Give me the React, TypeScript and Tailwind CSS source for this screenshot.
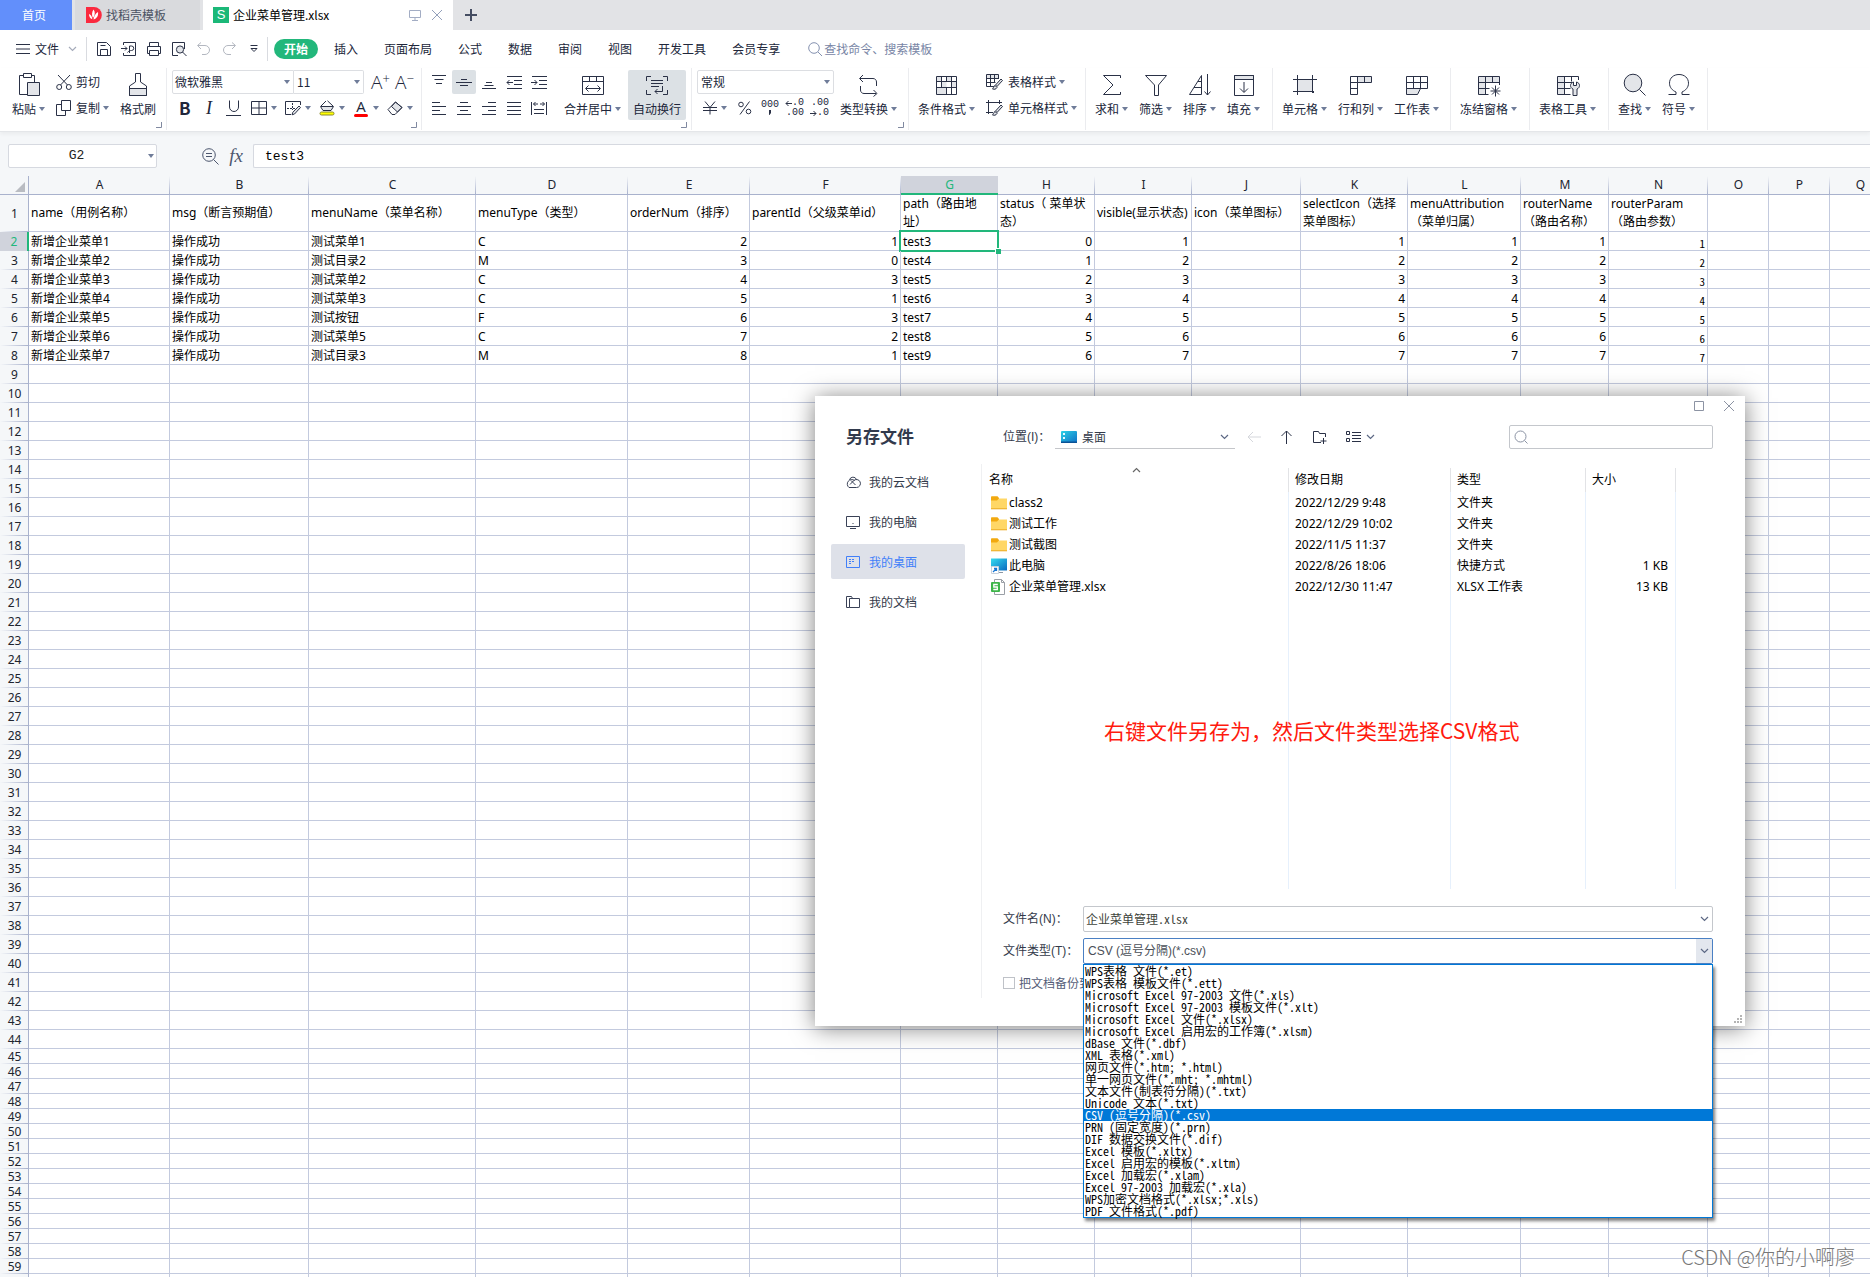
import React from 'react';

const INK = '#2a3146';
const PALE = '#e3e5e9';

type SvgProps = { w?: number; h?: number; color?: string; sw?: number; children: React.ReactNode };

function Svg({ w = 24, h = 24, color = INK, sw = 1, children }: SvgProps) {
  return (
    <svg width={w} height={h} viewBox={`0 0 ${w} ${h}`} fill="none" stroke={color} strokeWidth={sw} className="block shrink-0" aria-hidden="true">
      {children}
    </svg>
  );
}

function Caret() {
  return (
    <svg width="6" height="4" viewBox="0 0 6 4" className="block shrink-0" aria-hidden="true">
      <path d="M0 0h6L3 4z" fill="#6f7c99" />
    </svg>
  );
}

function Chevron({ color = '#5c6884' }: { color?: string }) {
  return (
    <Svg w={9} h={6} color={color} sw={1.2}>
      <path d="M1 1l3.5 3.5L8 1" />
    </Svg>
  );
}

/* ---------- ribbon drawings ---------- */

const icons = {
  paste: (
    <Svg>
      <path d="M6.5 2.5h-4v19h8M14.5 2.5h3v7" />
      <path d="M6.5.5h8v4h-8z" fill="#fff" />
      <path d="M10.5 9.5h12v13h-12z" fill={PALE} />
    </Svg>
  ),
  brush: (
    <Svg>
      <path d="M3.5 15.5h17v7h-17z" fill={PALE} />
      <path d="M9.5.5h5V9l6 4v9.5h-17V13l6-4z" />
    </Svg>
  ),
  cut: (
    <Svg w={16} h={16}>
      <circle cx="3.2" cy="13" r="2.5" />
      <circle cx="12.8" cy="13" r="2.5" />
      <path d="M2 1l9.5 10M14 1l-9.5 10" />
    </Svg>
  ),
  copy: (
    <Svg w={16} h={16}>
      <path d="M5.5.5h9v10h-9z" />
      <path d="M5.5 4.5h-5v11h9v-5" />
    </Svg>
  ),
  merge: (
    <Svg>
      <path d="M1.5 3.5h21v18h-21zM1.5 8.5h21M8.5 3.5v5M15.5 3.5v5" />
      <path d="M5 15.5h14M7.5 12.5l-3 3 3 3M16.5 12.5l3 3-3 3" />
    </Svg>
  ),
  wrap: (
    <Svg>
      <path d="M1.5 8V3.5H6M18 3.5h4.5V8M22.5 17v4.5H18M6 21.5H1.5V17" />
      <path d="M6 7.5h12M6 10.5h12M6 13.5h8M17.5 13v5.5H10M12.5 16L10 18.5l2.5 2.5" />
    </Svg>
  ),
  convert: (
    <Svg>
      <path d="M3 5.5h13c2 0 3.500 1.500 3.500 3.500v4M6 2L2.500 5.500 6 9M19 20.500H7c-2 0-3.500-1.500-3.500-3.500v-4M16.500 17l3.500 3.500-3.500 3" />
    </Svg>
  ),
  cond: (
    <Svg>
      <path d="M1.5 3.500h5v5h-5zM11.500 3.500h5v5h-5zM6.500 8.500h5v6h-5zM16.500 8.500h5v6h-5zM1.500 14.500h10v7h-10z" fill={PALE} stroke="none" />
      <path d="M1.500 3.500h20v18h-20zM1.500 8.500h20M1.500 14.500h20M6.500 3.500v11M11.500 3.500v5M16.500 8.500v13M11.500 14.500v7M16.500 3.500v5" />
    </Svg>
  ),
  tableStyle: (
    <Svg w={18} h={16}>
      <path d="M1 1h11v4H1z" fill={PALE} stroke="none" />
      <path d="M8 12.5H.5V.5h12V5M.5 4.5h12M.5 8.5h9M4.5.5v12M8.500.5v8" />
      <path d="M15 5l1.500 1.500-5.500 6-1.500-1.500zM9 11.500l2 2c-1 2-3 2-4.500 1.500 1-.8.8-2.500 2.500-3.500z" fill={PALE} />
    </Svg>
  ),
  cellStyle: (
    <Svg w={18} h={16}>
      <path d="M2.5 0v14M0 2.5h16M13.5 0v4M0 12.5h7" />
      <path d="M15 5l1.500 1.500-5.500 6-1.500-1.500zM9 11.500l2 2c-1 2-3 2-4.500 1.500 1-.8.8-2.500 2.500-3.500z" fill={PALE} />
    </Svg>
  ),
  sum: (
    <Svg>
      <path d="M20.5 5V2.500h-17L13 12l-9.500 9.500h17V19" />
    </Svg>
  ),
  filter: (
    <Svg>
      <path d="M1.5 2.500h21L14.500 12v10.500h-4V12z" />
    </Svg>
  ),
  sort: (
    <Svg>
      <path d="M13.5 2.500v19h-12zM10 8.500h3.500M6 14.500h7.500M19.500 1v21M16.500 18.500l3 3.500 3-3.500" />
    </Svg>
  ),
  fill: (
    <Svg>
      <path d="M2.5 2.500h19v4h-19z" fill={PALE} />
      <path d="M2.5 2.500h19v20h-19zM12 9v10M8 15.500l4 4 4-4" />
    </Svg>
  ),
  cell: (
    <Svg>
      <path d="M4.5 6.500h15v12h-15z" fill={PALE} />
      <path d="M4.500 2v20M19.500 2v13M0 6.500h24M0 18.500h17" />
      <path d="M19 18h2v2h-2z" fill={INK} stroke="none" />
    </Svg>
  ),
  rowcol: (
    <Svg>
      <path d="M9 4h13v6H9z" fill={PALE} stroke="none" />
      <path d="M1.5 3.500h21v6h-14v12h-7zM8.500 3.500v6M15.500 3.500v6M1.500 9.500h7M1.500 15.500h7" />
    </Svg>
  ),
  sheet: (
    <Svg>
      <path d="M1.5 15.500h14l-3 6h-11z" fill={PALE} />
      <path d="M1.500 15.500v-12h21v12zM1.500 9.500h21M8.500 3.500v12M15.500 3.500v12" />
    </Svg>
  ),
  freeze: (
    <Svg>
      <path d="M1.500 3.500h21v6h-14v12h-7z" fill={PALE} stroke="none" />
      <path d="M22.500 12V3.500h-21v18h10M1.500 9.500h21M1.500 15.500h11M8.500 3.500v18M15.500 3.500v6" />
      <path d="M18.500 12.500v11M13.500 18h10M15 14.500l7 7M22 14.500l-7 7" />
    </Svg>
  ),
  tools: (
    <Svg>
      <path d="M1.500 3.500h7v18h-7z" fill={PALE} stroke="none" />
      <path d="M22.500 7V3.500h-21v18h13M1.500 9.500h15M1.500 15.500h13M8.500 3.500v18M15.500 3.500v5" />
      <path d="M17.500 9v3.500h3V9c2 .5 3 2 3 3.500s-1 3-2.500 3.500v6.500h-4V16c-1.500-.5-2.500-2-2.500-3.500s1-3 3-3.500z" fill={PALE} />
    </Svg>
  ),
  find: (
    <Svg>
      <circle cx="10" cy="10" r="8.800" fill={PALE} />
      <path d="M16.500 16.500l6 6" />
    </Svg>
  ),
  omega: (
    <Svg>
      <path d="M1.500 21.500H9V19c-3.500-1.500-6.500-4.500-6.500-8.800C2.500 5 6.500 1.500 12 1.500s9.500 3.500 9.500 8.700c0 4.300-3 7.300-6.500 8.800v2.500h7.500" />
    </Svg>
  ),
  alignTop: <path d="M1 1.500h14M3.500 5.500h9M5 9.500h6" />,
  alignMid: <path d="M5 5.500h6M0 8.500h16M4 11.500h8" />,
  alignBottom: <path d="M5 8.500h6M3.500 11.500h9M1 14.500h14" />,
  outdent: <path d="M1 2.500h15M8 6.500h8M8 10.500h8M1 14.500h15M7 8.500H1M3.500 6L1 8.500 3.500 11" />,
  indent: <path d="M1 2.500h15M8 6.500h8M8 10.500h8M1 14.500h15M0 8.500h6M3.500 6L6 8.500 3.500 11" />,
  left: <path d="M1 2.500h8M1 6.500h14M1 10.500h8M1 14.500h14" />,
  center: <path d="M4 2.500h8M1 6.500h14M4 10.500h8M1 14.500h14" />,
  right: <path d="M7 2.500h8M1 6.500h14M7 10.500h8M1 14.500h14" />,
  justify: <path d="M1 2.500h14M1 6.500h14M1 10.500h14M1 14.500h14" />,
  distribute: <path d="M.5 2v13M15.500 2v13M2.500 4H7M9 4h4.500M4.500 2l-2 2 2 2M11.500 2l2 2-2 2M3 9.500h10M3 13.500h10" />,
};

/* ---------- ribbon building blocks ---------- */

function Group({ children, className = '' }: { children: React.ReactNode; className?: string }) {
  return <div className={`relative flex h-[62px] shrink-0 items-start gap-[11px] border-r border-[#ebecef] pt-0.5 pl-[9px] ${className}`}>{children}</div>;
}

function Launcher() {
  return (
    <span className="absolute right-1 bottom-0.5">
      <Svg w={6} h={6} color="#8089a0">
        <path d="M5.500 0v5.500H0" />
      </Svg>
    </span>
  );
}

function Big({ icon, label, caret = true, active = false }: { icon: React.ReactNode; label: string; caret?: boolean; active?: boolean }) {
  return (
    <button type="button" className={`flex h-[50px] shrink-0 flex-col items-center gap-1 rounded-xs pt-[3px] ${active ? 'bg-[#dce1e5] px-[5px]' : ''}`}>
      {icon}
      <span className="flex items-center gap-[3px] leading-4 whitespace-nowrap">
        {label}
        {caret && <Caret />}
      </span>
    </button>
  );
}

function Small({ icon, label, caret = true }: { icon: React.ReactNode; label: string; caret?: boolean }) {
  return (
    <button type="button" className="flex h-6 items-center gap-[3px] whitespace-nowrap">
      {icon}
      <span className="pl-px">{label}</span>
      {caret && <Caret />}
    </button>
  );
}

function AlignButton({ name, icon, active = false }: { name: string; icon: React.ReactNode; active?: boolean }) {
  return (
    <button type="button" aria-label={name} className={`flex h-6 w-6 items-center justify-center rounded-xs ${active ? 'bg-[#dce1e5]' : ''}`}>
      <Svg w={16} h={16}>{icon}</Svg>
    </button>
  );
}

function FormatButton({ name, children, caret = true, className = 'w-[34px]' }: { name: string; children: React.ReactNode; caret?: boolean; className?: string }) {
  return (
    <button type="button" aria-label={name} className={`flex h-6 shrink-0 items-center gap-1 ${className}`}>
      {children}
      {caret && <Caret />}
    </button>
  );
}

/* ---------- top bars ---------- */

function TabStrip() {
  return (
    <div className="flex h-[30px] shrink-0 bg-[#e2e3e6] text-xs">
      <button type="button" className="w-[72px] bg-[#628ffb] pr-1 text-white">首页</button>
      <button type="button" className="ml-[3px] flex w-[125px] items-center gap-1 bg-[#d9dadd] pl-[11px] text-[#4b5263]">
        <svg width="16" height="16" viewBox="0 0 16 16" aria-hidden="true">
          <path d="M0 0h8a7.800 8 0 0 1 0 16H0z" fill="#fb2a3f" />
          <path d="M7.500 2.500c2 2.500 1.500 6-.5 8.500C5.500 8.500 5.800 5 7.500 2.500zM12 5c.5 3.500-1 6.500-4.500 7.500C8 9 9.500 6.500 12 5zM3 7c2 .8 3.200 2.800 3.300 5.300C4 11.500 3 9.500 3 7z" fill="#fff" />
        </svg>
        找稻壳模板
      </button>
      <div className="ml-[3px] flex w-[250px] items-center bg-white pl-2.5 text-black">
        <span className="flex h-4 w-4 items-center justify-center bg-[#1bb878] font-['Liberation_Sans'] text-[13px] leading-4 text-white">S</span>
        <span className="flex-1 pl-1">企业菜单管理.xlsx</span>
        <button type="button" aria-label="窗口显示">
          <Svg w={12} h={12} color="#a3adc4"><path d="M.5 1.500h11v7H.5zM6 8.500v3M3 11.500h6" /></Svg>
        </button>
        <button type="button" aria-label="关闭标签" className="pr-2.5 pl-2.5">
          <Svg w={12} h={12} color="#93a0bb"><path d="M1 1l10 10M11 1L1 11" /></Svg>
        </button>
      </div>
      <button type="button" aria-label="新建标签" className="w-9 pl-3">
        <Svg w={12} h={12} color="#454d62" sw={2}><path d="M6 0v12M0 6h12" /></Svg>
      </button>
    </div>
  );
}

const quick: { name: string; icon: React.ReactNode }[] = [
  { name: '保存', icon: <Svg w={16} h={16}><path d="M1.500 1.500h9l4 4v9h-13zM4.500 14V8.500h7V14M4.500 4.500h5" /></Svg> },
  { name: '输出', icon: <Svg w={16} h={16}><path d="M2.500 4V1.500h12v13h-12V12M0 7.500h6M4 5.500l2 2-2 2M8.500 12V5h2a2.200 2.200 0 0 1 0 4.500c-1.500 0-3 .5-4 2" /></Svg> },
  { name: '打印', icon: <Svg w={16} h={16}><path d="M3.500 5V1.500h9V5M3 12.500H1.500v-7h13v7H13M3.500 9.500h9v5h-9z" /></Svg> },
  { name: '打印预览', icon: <Svg w={16} h={16}><path d="M7 14.500H1.500v-13h12V8" /><circle cx="9" cy="8.500" r="3.600" fill={PALE} /><path d="M11.500 11l4 4" /></Svg> },
  { name: '撤销', icon: <Svg w={16} h={16} color="#b3b7c0"><path d="M5 1.500l-3.500 3L5 8M2 4.500h7a4.500 4.500 0 0 1 0 9H6" /></Svg> },
  { name: '恢复', icon: <Svg w={16} h={16} color="#b3b7c0"><path d="M11 1.500l3.500 3L11 8M14 4.500H7a4.500 4.500 0 0 0 0 9h3" /></Svg> },
  { name: '更多', icon: <Svg w={10} h={8}><path d="M1.500.5h7M2 3.500L5 6.500l3-3z" /></Svg> },
];

function MenuRow() {
  return (
    <div className="flex h-[38px] shrink-0 items-center bg-white text-xs text-[#20263a]">
      <button type="button" className="flex w-[87px] items-center gap-[5px] border-r border-[#d9dbe0] py-1 pl-4">
        <Svg w={14} h={12}><path d="M0 1.500h14M0 6h14M0 10.500h14" /></Svg>
        文件
        <span className="pl-1"><Chevron color="#a5abba" /></span>
      </button>
      <div className="flex w-[181px] items-center border-r border-[#d9dbe0] py-1 pl-1">
        {quick.map((q) => (
          <button key={q.name} type="button" aria-label={q.name} className="flex h-4 w-[25px] items-center justify-center">{q.icon}</button>
        ))}
      </div>
      <nav className="flex items-center gap-[26px] pl-1.5">
        <button type="button" className="-mr-2.5 h-5 rounded-full bg-[#22b77b] px-2.5 font-bold text-white">开始</button>
        {['插入', '页面布局', '公式', '数据', '审阅', '视图', '开发工具', '会员专享'].map((t) => (
          <button key={t} type="button" className="whitespace-nowrap">{t}</button>
        ))}
      </nav>
      <label className="flex items-center gap-0.5 pl-7">
        <Svg w={14} h={14} color="#8592b0"><circle cx="6" cy="6" r="5.300" /><path d="M10 10l4 4" /></Svg>
        <input type="text" aria-label="查找命令" placeholder="查找命令、搜索模板" className="w-40 bg-transparent text-xs placeholder:text-[#7885a5] focus:outline-none" />
      </label>
    </div>
  );
}

function SmallArrow({ flip = false }: { flip?: boolean }) {
  return (
    <svg width="7" height="7" viewBox="0 0 7 7" fill="none" stroke={INK} className="block shrink-0" aria-hidden="true">
      <path d={flip ? 'M0 3.500h6M3.500 1L6 3.500 3.500 6' : 'M7 3.500H1M3.500 1L1 3.500 3.500 6'} />
    </svg>
  );
}

function Ribbon() {
  return (
    <div className="z-10 flex h-16 shrink-0 border-b border-[#e4e6e9] bg-white text-xs text-[#20263a] shadow-[0_2px_4px_rgba(0,0,0,0.05)]">
      <Group className="w-[167px]">
        <div className="pl-[3px]"><Big icon={icons.paste} label="粘贴" /></div>
        <div className="flex flex-col gap-0.5">
          <Small icon={icons.cut} label="剪切" caret={false} />
          <Small icon={icons.copy} label="复制" />
        </div>
        <Big icon={icons.brush} label="格式刷" caret={false} />
        <Launcher />
      </Group>

      <Group className="w-[255px]">
        <div className="-ml-1 flex flex-col gap-0.5">
          <div className="flex h-6 items-center">
            <button type="button" aria-label="字体" className="flex h-6 w-[122px] items-center justify-between rounded-l-xs border border-[#dcdee2] pr-[3px] pl-0.5">微软雅黑<Caret /></button>
            <button type="button" aria-label="字号" className="flex h-6 w-[70px] items-center justify-between rounded-r-xs border border-l-0 border-[#dcdee2] pr-[3px] pl-[3px]">11<Caret /></button>
            <button type="button" aria-label="增大字号" className="flex w-6 items-start pl-[7px] font-['Open_Sans'] text-[19px] leading-5 font-light">A<span className="-mt-1 text-[13px]">+</span></button>
            <button type="button" aria-label="减小字号" className="flex w-6 items-start pl-[7px] font-['Open_Sans'] text-[19px] leading-5 font-light">A<span className="-mt-1 text-[13px]">−</span></button>
          </div>
          <div className="flex h-6 items-center pl-1.5">
            <FormatButton name="加粗" caret={false} className="w-7 pl-px text-[17px] font-bold">B</FormatButton>
            <FormatButton name="倾斜" caret={false} className="w-5 font-['Liberation_Serif'] text-[18px] italic">I</FormatButton>
            <FormatButton name="下划线" caret={false} className="w-[25px]"><Svg w={16} h={16}><path d="M3.500.5V7a4.500 4.500 0 0 0 9 0V.5M0 15.500h15" /></Svg></FormatButton>
            <FormatButton name="边框"><Svg w={16} h={16}><path d="M.5 1.500h15v13H.5zM8 1.500v13M.5 8h15" /></Svg></FormatButton>
            <FormatButton name="绘图边框">
              <Svg w={16} h={16}>
                <path d="M15.500 5V1.500H.5v13H6" /><path d="M7.500 3v7M2 8.500h8" strokeDasharray="2 1" />
                <path d="M14 6l1.500 1.500-6 6.500-2.500.8.8-2.500z" fill={PALE} />
              </Svg>
            </FormatButton>
            <FormatButton name="填充颜色">
              <Svg w={16} h={16}>
                <path d="M3 7h11l-2 3H4.500z" fill={PALE} stroke="none" />
                <path d="M7 1L1.500 6.500 4 10.500h8l2.500-4L8.500.8M2 6.500h12" />
                <rect x="1" y="12" width="14" height="3" rx="1.500" fill="#ff0" stroke="#8a8a30" />
              </Svg>
            </FormatButton>
            <FormatButton name="字体颜色">
              <span className="flex w-4 flex-col items-center">
                <span className="h-3 font-['Open_Sans'] text-[15px] leading-3">A</span>
                <span className="mt-0.5 h-[3px] w-3.5 rounded-full bg-[#fe0000]" />
              </span>
            </FormatButton>
            <FormatButton name="清除"><Svg w={16} h={16}><path d="M4.500 6.500l6 5.500L15 7.500 8.500 2z" fill={PALE} /><path d="M1 9.500L8.500 2l6.500 5.500-7 7H5z" /></Svg></FormatButton>
          </div>
        </div>
        <Launcher />
      </Group>

      <Group className="w-[270px]">
        <div className="-ml-1 grid grid-cols-5 gap-x-px gap-y-0.5">
          <AlignButton name="顶端对齐" icon={icons.alignTop} />
          <AlignButton name="垂直居中" icon={icons.alignMid} active />
          <AlignButton name="底端对齐" icon={icons.alignBottom} />
          <AlignButton name="减少缩进" icon={icons.outdent} />
          <AlignButton name="增加缩进" icon={icons.indent} />
          <AlignButton name="左对齐" icon={icons.left} />
          <AlignButton name="水平居中" icon={icons.center} />
          <AlignButton name="右对齐" icon={icons.right} />
          <AlignButton name="两端对齐" icon={icons.justify} />
          <AlignButton name="分散对齐" icon={icons.distribute} />
        </div>
        <div className="flex gap-[7px] pl-0.5">
          <Big icon={icons.merge} label="合并居中" />
          <Big icon={icons.wrap} label="自动换行" caret={false} active />
        </div>
        <Launcher />
      </Group>

      <Group className="w-[217px]">
        <div className="-ml-1 flex flex-col gap-0.5">
          <button type="button" aria-label="数字格式" className="flex h-6 w-[137px] items-center justify-between rounded-xs border border-[#dcdee2] pr-[3px] pl-[3px]">常规<Caret /></button>
          <div className="flex h-6 items-center pl-1.5">
            <FormatButton name="货币" className="w-[35px]"><Svg w={14} h={14}><path d="M2 .5l5 6 5-6M7 6.500v7M0 6.500h14M0 9.500h14" /></Svg></FormatButton>
            <FormatButton name="百分比" caret={false} className="w-[23px]"><Svg w={14} h={14}><circle cx="3" cy="3.500" r="2.300" /><circle cx="10.500" cy="10.500" r="2.300" /><path d="M11.500.5l-9.500 13" /></Svg></FormatButton>
            <FormatButton name="千位分隔" caret={false} className="w-[25px] font-['Liberation_Mono'] text-[10px] leading-[10px]">
              <span className="flex flex-col items-center">
                <span>000</span>
                <svg width="4" height="6" viewBox="0 0 4 6" className="block" aria-hidden="true"><path d="M1 0h2v3L1.500 5H1z" fill={INK} /></svg>
              </span>
            </FormatButton>
            <FormatButton name="增加小数位" caret={false} className="w-[25px] font-['Liberation_Mono'] text-[10px] leading-[10px]">
              <span className="flex w-[18px] flex-col items-end">
                <span className="flex items-center"><SmallArrow />.0</span>
                <span>.00</span>
              </span>
            </FormatButton>
            <FormatButton name="减少小数位" caret={false} className="w-[18px] font-['Liberation_Mono'] text-[10px] leading-[10px]">
              <span className="flex w-[18px] flex-col items-end">
                <span>.00</span>
                <span className="flex items-center"><SmallArrow flip />.0</span>
              </span>
            </FormatButton>
          </div>
        </div>
        <div className="-ml-[5px]"><Big icon={icons.convert} label="类型转换" /></div>
        <Launcher />
      </Group>

      <Group className="w-[177px]">
        <Big icon={icons.cond} label="条件格式" />
        <div className="flex flex-col gap-0.5">
          <Small icon={icons.tableStyle} label="表格样式" />
          <Small icon={icons.cellStyle} label="单元格样式" />
        </div>
      </Group>
      <Group className="w-[187px]">
        <Big icon={icons.sum} label="求和" />
        <Big icon={icons.filter} label="筛选" />
        <Big icon={icons.sort} label="排序" />
        <Big icon={icons.fill} label="填充" />
      </Group>
      <Group className="w-[178px]">
        <Big icon={icons.cell} label="单元格" />
        <Big icon={icons.rowcol} label="行和列" />
        <Big icon={icons.sheet} label="工作表" />
      </Group>
      <Group className="w-[79px]"><Big icon={icons.freeze} label="冻结窗格" /></Group>
      <Group className="w-[79px]"><Big icon={icons.tools} label="表格工具" /></Group>
      <Group className="w-[99px]">
        <Big icon={icons.find} label="查找" />
        <Big icon={icons.omega} label="符号" />
      </Group>
    </div>
  );
}

function FormulaBar() {
  return (
    <div className="flex h-11 shrink-0 items-center bg-[#f5f7f9] pt-[5px] pb-px pl-2">
      <div className="flex h-6 w-[149px] items-center rounded-xs border border-[#d6d9e0] bg-white pr-0.5">
        <input type="text" aria-label="名称框" defaultValue="G2" className="min-w-0 flex-1 bg-transparent pr-1 text-center font-['Liberation_Mono'] text-[13px] text-[#222] focus:outline-none" />
        <Caret />
      </div>
      <div className="flex w-24 items-center justify-end gap-2.5 pr-2.5">
        <button type="button" aria-label="浏览公式"><Svg w={17} h={17} color="#4c566e"><circle cx="7" cy="7" r="6.300" /><path d="M11.500 11.500l5 5M4 5.500h6M4 8.500h6" /></Svg></button>
        <button type="button" aria-label="插入函数" className="font-['Liberation_Serif'] text-[19px] leading-5 text-[#4c566e] italic">fx</button>
      </div>
      <input type="text" aria-label="编辑栏" defaultValue="test3" className="h-6 min-w-0 flex-1 rounded-l-xs border border-r-0 border-[#d6d9e0] bg-white pl-[11px] font-['Liberation_Mono'] text-[13px] text-black focus:outline-none" />
    </div>
  );
}

/* ---------- sheet ---------- */

const columns: { id: string; width: number; head?: string[] }[] = [
  { id: 'A', width: 141, head: ['name（用例名称）'] },
  { id: 'B', width: 139, head: ['msg（断言预期值）'] },
  { id: 'C', width: 167, head: ['menuName（菜单名称）'] },
  { id: 'D', width: 152, head: ['menuType（类型）'] },
  { id: 'E', width: 122, head: ['orderNum（排序）'] },
  { id: 'F', width: 151, head: ['parentId（父级菜单id）'] },
  { id: 'G', width: 97, head: ['path（路由地', '址）'] },
  { id: 'H', width: 97, head: ['status（ 菜单状', '态）'] },
  { id: 'I', width: 97, head: ['visible(显示状态)'] },
  { id: 'J', width: 109, head: ['icon（菜单图标）'] },
  { id: 'K', width: 107, head: ['selectIcon（选择', '菜单图标）'] },
  { id: 'L', width: 113, head: ['menuAttribution', '（菜单归属）'] },
  { id: 'M', width: 88, head: ['routerName', '（路由名称）'] },
  { id: 'N', width: 99, head: ['routerParam', '（路由参数）'] },
  { id: 'O', width: 61 },
  { id: 'P', width: 61 },
  { id: 'Q', width: 61 },
];

const data: (string | number)[][] = [
  ['新增企业菜单1', '操作成功', '测试菜单1', 'C', 2, 1, 'test3', 0, 1, '', 1, 1, 1, 1],
  ['新增企业菜单2', '操作成功', '测试目录2', 'M', 3, 0, 'test4', 1, 2, '', 2, 2, 2, 2],
  ['新增企业菜单3', '操作成功', '测试菜单2', 'C', 4, 3, 'test5', 2, 3, '', 3, 3, 3, 3],
  ['新增企业菜单4', '操作成功', '测试菜单3', 'C', 5, 1, 'test6', 3, 4, '', 4, 4, 4, 4],
  ['新增企业菜单5', '操作成功', '测试按钮', 'F', 6, 3, 'test7', 4, 5, '', 5, 5, 5, 5],
  ['新增企业菜单6', '操作成功', '测试菜单5', 'C', 7, 2, 'test8', 5, 6, '', 6, 6, 6, 6],
  ['新增企业菜单7', '操作成功', '测试目录3', 'M', 8, 1, 'test9', 6, 7, '', 7, 7, 7, 7],
];

const rowNumbers = Array.from({ length: 60 }, (_, i) => i + 1);
const sheetWidth = 29 + columns.reduce((sum, c) => sum + c.width, 0);

function rowHeight(n: number) {
  if (n === 1) return 'h-[37px]';
  return n <= 44 ? 'h-[19px]' : 'h-[15px]';
}

function Sheet() {
  return (
    <div className="min-h-0 flex-1 overflow-hidden bg-white font-['Noto_Sans','Noto_Sans_CJK_SC',sans-serif] text-xs text-black">
      <table className="table-fixed border-separate border-spacing-0" style={{ width: sheetWidth }}>
        <colgroup>
          <col className="w-[29px]" />
          {columns.map((c) => <col key={c.id} style={{ width: c.width }} />)}
        </colgroup>
        <thead>
          <tr>
            <th className="h-[19px] border-r border-b border-[#a9b2cd] bg-[#f5f7f9] p-0">
              <svg width="10" height="10" viewBox="0 0 10 10" className="ml-auto mr-[3px] mt-1" aria-hidden="true"><path d="M10 0v10H0z" fill="#b9bcc2" /></svg>
            </th>
            {columns.map((c) => (
              <th
                key={c.id}
                className={
                  c.id === 'G'
                    ? 'h-[19px] border-b-2 border-[#22b77b] bg-[#d0d3dc] p-0 leading-4 font-normal text-[#22b77b]'
                    : 'h-[19px] border-b border-[#a9b2cd] bg-[#f5f7f9] bg-[linear-gradient(to_bottom,#f5f7f9,#a9b2cd)] bg-[length:1px_100%] bg-right bg-no-repeat p-0 leading-4 font-normal text-[#20242e]'
                }
              >
                {c.id}
              </th>
            ))}
          </tr>
        </thead>
        <tbody>
          {rowNumbers.map((n) => (
            <tr key={n}>
              <th
                className={`${rowHeight(n)} p-0 pl-px leading-[14px] font-normal ${
                  n === 2
                    ? 'border-r-2 border-[#22b77b] bg-[#d0d3dc] text-[#22b77b]'
                    : 'border-r border-[#a9b2cd] bg-[#f5f7f9] bg-[linear-gradient(to_right,#f5f7f9,#a9b2cd)] bg-[length:100%_1px] bg-bottom bg-no-repeat text-[#20242e]'
                }`}
              >
                {n < 60 ? n : ''}
              </th>
              {columns.map((c, i) => {
                const value = n >= 2 && n <= 8 ? data[n - 2][i] : undefined;
                const selected = n === 2 && c.id === 'G';
                const align = typeof value === 'number' ? 'text-right' : 'text-left';
                return (
                  <td key={c.id} className={`relative border-r border-b border-[#c3cade] px-0.5 pb-0 whitespace-nowrap ${align} ${n === 1 ? 'pt-0 leading-[18px]' : n <= 8 ? 'pt-px leading-[14px]' : 'pt-0 leading-[14px]'}`}>
                    {n === 1 && c.head?.map((line) => <div key={line}>{line}</div>)}
                    {value !== undefined && (c.id === 'N'
                      ? <span className="block pt-0.5 font-['Noto_Sans_Mono_CJK_SC','Liberation_Mono',monospace] text-[11px] leading-3">{value}</span>
                      : value)}
                    {selected && (
                      <>
                        <span className="absolute -inset-0.5 border-2 border-[#22b77b]" />
                        <span className="absolute -right-1 -bottom-1 z-10 h-1.5 w-1.5 border-t border-l border-white bg-[#22b77b]" />
                      </>
                    )}
                  </td>
                );
              })}
            </tr>
          ))}
        </tbody>
      </table>
    </div>
  );
}

/* ---------- save dialog ---------- */

const FolderIcon = (
  <svg width="16" height="14" viewBox="0 0 16 14" className="block shrink-0" aria-hidden="true">
    <path d="M0 1.200C0 .5.500.2 1 .2h5.500L8 2v3H0z" fill="#f2a90f" />
    <path d="M0 4.500h6l1.800-2H16V13H0z" fill="#ffd766" />
    <path d="M0 12.200h16V13.300H0z" fill="#eeb02c" />
  </svg>
);

const DesktopIcon = (
  <svg width="16" height="12" viewBox="0 0 16 12" className="block shrink-0" aria-hidden="true">
    <defs>
      <linearGradient id="desk" x1="0" y1="0" x2="1" y2="1"><stop offset="0" stopColor="#2cd2e6" /><stop offset="1" stopColor="#0f6fc6" /></linearGradient>
    </defs>
    <rect width="16" height="12" rx="1" fill="url(#desk)" />
    <path d="M2 2h2v2H2zM2 6h2v2H2z" fill="#e7fbff" />
    <path d="M0 10.500h16V12H0z" fill="#0a5296" />
  </svg>
);

const ComputerIcon = (
  <svg width="16" height="16" viewBox="0 0 16 16" className="block shrink-0" aria-hidden="true">
    <defs>
      <linearGradient id="pc" x1="0" y1="0" x2="1" y2="1"><stop offset="0" stopColor="#35dcf0" /><stop offset="1" stopColor="#0b6ac0" /></linearGradient>
    </defs>
    <path d="M0 .5h16v12H0z" fill="url(#pc)" />
    <path d="M7 14h5v1H7z" fill="#8a97a5" />
    <path d="M.5 8.500h7v7h-7z" fill="#fff" stroke="#c9d2dc" />
    <path d="M2 14l3.500-3.500M3 10.500h2.500V13" fill="none" stroke="#1876d2" strokeWidth="1.300" />
  </svg>
);

const XlsxIcon = (
  <svg width="16" height="16" viewBox="0 0 16 16" className="block shrink-0" aria-hidden="true">
    <path d="M3.500.5h7l3 3v12h-10z" fill="#fff" stroke="#9a9fa6" />
    <path d="M10.500.5v3h3" fill="none" stroke="#9a9fa6" />
    <rect y="3" width="9" height="10" rx="1" fill="#3db54a" />
    <path d="M6.800 5.500H2.800V8h3.500v2.500H2.300" fill="none" stroke="#fff" strokeWidth="1.300" />
  </svg>
);

const files: { icon: React.ReactNode; name: string; date: string; type: string; size: string }[] = [
  { icon: FolderIcon, name: 'class2', date: '2022/12/29 9:48', type: '文件夹', size: '' },
  { icon: FolderIcon, name: '测试工作', date: '2022/12/29 10:02', type: '文件夹', size: '' },
  { icon: FolderIcon, name: '测试截图', date: '2022/11/5 11:37', type: '文件夹', size: '' },
  { icon: ComputerIcon, name: '此电脑', date: '2022/8/26 18:06', type: '快捷方式', size: '1 KB' },
  { icon: XlsxIcon, name: '企业菜单管理.xlsx', date: '2022/12/30 11:47', type: 'XLSX 工作表', size: '13 KB' },
];

const places: { label: string; icon: React.ReactNode; active?: boolean }[] = [
  { label: '我的云文档', icon: <><path d="M9.500 6.500A3.700 3.700 0 1 0 4 13.500h7.500a4 4 0 1 0-3-6.700L5 10.500" /><path d="M4.500 5.800a3.700 3.700 0 0 1 7-.3M6 6.500l4.500 4.500" /></> },
  { label: '我的电脑', icon: <path d="M1.500 2.500h13v10h-13zM5 14.500h6M7.500 9.500h1" /> },
  { label: '我的桌面', icon: <path d="M1.500 2.500h13v11h-13zM4 5.500h2M7 5.500h2M4 7.500h2M7 7.500h2M4 9.500h2" />, active: true },
  { label: '我的文档', icon: <path d="M4.500 13.500h-3v-11h5l1 2M4.500 4.500h10v9h-10z" /> },
];

const fileTypes = [
  'WPS表格 文件(*.et)',
  'WPS表格 模板文件(*.ett)',
  'Microsoft Excel 97-2003 文件(*.xls)',
  'Microsoft Excel 97-2003 模板文件(*.xlt)',
  'Microsoft Excel 文件(*.xlsx)',
  'Microsoft Excel 启用宏的工作簿(*.xlsm)',
  'dBase 文件(*.dbf)',
  'XML 表格(*.xml)',
  '网页文件(*.htm; *.html)',
  '单一网页文件(*.mht; *.mhtml)',
  '文本文件(制表符分隔)(*.txt)',
  'Unicode 文本(*.txt)',
  'CSV (逗号分隔)(*.csv)',
  'PRN (固定宽度)(*.prn)',
  'DIF 数据交换文件(*.dif)',
  'Excel 模板(*.xltx)',
  'Excel 启用宏的模板(*.xltm)',
  'Excel 加载宏(*.xlam)',
  'Excel 97-2003 加载宏(*.xla)',
  'WPS加密文档格式(*.xlsx;*.xls)',
  'PDF 文件格式(*.pdf)',
];

function FileList() {
  const line = 'border-r border-[#e6f0fc]';
  const headLine = 'border-r border-[#e2e3e6]';
  return (
    <table className="mt-2.5 w-[694px] table-fixed border-separate border-spacing-0 font-['Noto_Sans','Noto_Sans_CJK_SC',sans-serif] text-black">
      <colgroup>
        <col className="w-[307px]" />
        <col className="w-[162px]" />
        <col className="w-[135px]" />
        <col className="w-[90px]" />
      </colgroup>
      <thead>
        <tr className="h-6 text-left">
          <th className={`relative p-0 pl-[7px] font-normal ${headLine}`}>
            名称
            <span className="absolute -top-px left-[150px] rotate-180"><Chevron color="#666" /></span>
          </th>
          <th className={`p-0 pl-1.5 font-normal ${headLine}`}>修改日期</th>
          <th className={`p-0 pl-1.5 font-normal ${headLine}`}>类型</th>
          <th className={`p-0 pl-1.5 font-normal ${headLine}`}>大小</th>
        </tr>
      </thead>
      <tbody>
        {files.map((f) => (
          <tr key={f.name} className="h-[21px] leading-5">
            <td className={`p-0 pl-[9px] ${line}`}>
              <span className="flex items-center gap-0.5">{f.icon}{f.name}</span>
            </td>
            <td className={`p-0 pl-1.5 ${line}`}>{f.date}</td>
            <td className={`p-0 pl-1.5 ${line}`}>{f.type}</td>
            <td className={`p-0 pr-[7px] text-right ${line}`}>{f.size}</td>
          </tr>
        ))}
        <tr className="h-[292px]">
          <td className={line} />
          <td className={line} />
          <td className={line} />
          <td className={line} />
        </tr>
      </tbody>
    </table>
  );
}

function SaveDialog() {
  return (
    <section role="dialog" aria-labelledby="save-title" className="absolute top-[396px] left-[815px] z-20 flex w-[930px] flex-col bg-white pb-7 text-xs text-[#333a4a] shadow-[0_2px_22px_rgba(0,0,0,0.5)]">
      <div className="flex h-5 justify-end pr-px">
        <button type="button" aria-label="最大化" className="flex w-[30px] items-center justify-center"><Svg w={10} h={10} color="#8c93a3"><path d="M.5.5h9v9h-9z" /></Svg></button>
        <button type="button" aria-label="关闭" className="flex w-[30px] items-center justify-center"><Svg w={12} h={12} color="#8c93a3"><path d="M1 1l10 10M11 1L1 11" /></Svg></button>
      </div>

      <div className="flex h-[42px] items-center pr-8 pl-[31px]">
        <h1 id="save-title" className="w-[157px] pb-0.5 text-[17px] font-bold text-[#323a4d]">另存文件</h1>
        <span className="w-[52px] font-['Liberation_Sans','Noto_Sans_CJK_SC']">位置(I)：</span>
        <button type="button" aria-label="位置" className="flex h-6 w-[180px] items-center gap-[5px] border-b border-[#c4c6ca] pr-1.5 pl-1.5">
          {DesktopIcon}
          <span className="flex-1 text-left">桌面</span>
          <Chevron />
        </button>
        <div className="flex items-center gap-[19px] pl-3">
          <button type="button" aria-label="后退"><Svg w={14} h={14} color="#d5d7dc"><path d="M14 7H1M6 2L1 7l5 5" /></Svg></button>
          <button type="button" aria-label="向上"><Svg w={14} h={14}><path d="M6.500 14V1M1.500 6l5-5 5 5" /></Svg></button>
          <button type="button" aria-label="新建文件夹"><Svg w={14} h={14}><path d="M8 12.500H.5v-11h5l1 2h6V7M10.500 8v6M7.500 11h6" /></Svg></button>
          <button type="button" aria-label="视图" className="flex items-center gap-[5px]">
            <Svg w={15} h={12}><path d="M.5.5h3v3h-3zM.5 7.500h3v3h-3zM6 1.500h9M6 4.500h9M6 7.500h9M6 10.500h9" /></Svg>
            <Chevron />
          </button>
        </div>
        <label className="ml-auto flex h-6 w-[204px] items-center rounded-xs border border-[#c4c7cc] pl-1">
          <Svg w={14} h={14} color="#8b93a4"><circle cx="6.500" cy="6.500" r="5.500" /><path d="M10.500 10.500l3 3" /></Svg>
          <input type="search" aria-label="搜索" className="min-w-0 flex-1 bg-transparent focus:outline-none" />
        </label>
      </div>

      <div className="flex">
        <nav className="mt-1.5 flex w-[167px] flex-col gap-[5px] border-r border-[#eff0f2] px-4">
          {places.map((p) => (
            <button key={p.label} type="button" className={`flex h-[35px] items-center gap-2 rounded-xs pl-3.5 ${p.active ? 'bg-[#dee1e9] text-[#417ff9]' : ''}`}>
              <Svg w={16} h={16} color={p.active ? '#417ff9' : '#3a4257'}>{p.icon}</Svg>
              {p.label}
            </button>
          ))}
        </nav>

        <div className="relative flex-1">
          <FileList />
          <p className="absolute top-64 left-[122px] text-[21px] leading-8 whitespace-nowrap text-[#ff1a0e]">右键文件另存为，然后文件类型选择CSV格式</p>

          <div className="mt-[17px] flex items-center pr-8 pl-[21px]">
            <label htmlFor="file-name" className="w-20 font-['Liberation_Sans','Noto_Sans_CJK_SC']">文件名(N)：</label>
            <div className="flex h-[26px] flex-1 items-center rounded-xs border border-[#c4c7cc] pr-[3px]">
              <input id="file-name" type="text" defaultValue="企业菜单管理.xlsx" className="min-w-0 flex-1 pl-0.5 font-['Noto_Sans_Mono_CJK_SC','Noto_Sans_CJK_SC',monospace] text-[#3e443c] focus:outline-none" />
              <Chevron />
            </div>
          </div>

          <div className="mt-1.5 flex items-center pr-8 pl-[21px]">
            <label htmlFor="file-type" className="w-20 font-['Liberation_Sans','Noto_Sans_CJK_SC']">文件类型(T)：</label>
            <div className="relative flex h-[26px] flex-1 rounded-xs border border-[#4a80c4]">
              <select id="file-type" defaultValue="csv" className="min-w-0 flex-1 appearance-none pl-1 font-['Liberation_Sans','Noto_Sans_CJK_SC'] text-[#4a4f58] focus:outline-none">
                <option value="csv">CSV (逗号分隔)(*.csv)</option>
              </select>
              <span className="flex w-4 items-center justify-center bg-[#e3e7ee]"><Chevron /></span>
              <ul role="listbox" aria-label="文件类型" className="absolute top-[25px] -right-px -left-px z-30 border border-[#0078d7] bg-white font-['Noto_Sans_Mono_CJK_SC','Noto_Sans_CJK_SC',monospace] leading-3 text-black shadow-[2px_3px_3px_rgba(0,0,0,0.5)]">
                {fileTypes.map((t) => (
                  <li key={t} role="option" aria-selected={t.startsWith('CSV')} className={`h-3 pl-px whitespace-pre ${t.startsWith('CSV') ? 'bg-[#0078d7] text-white' : ''}`}>{t}</li>
                ))}
              </ul>
            </div>
          </div>

          <label className="mt-[11px] mb-[7px] ml-[21px] flex h-4 items-center gap-1 text-[#555d78]">
            <input type="checkbox" className="h-3 w-3 appearance-none border border-[#bfc2c8] bg-white" />
            把文档备份到云
          </label>
        </div>
      </div>

      <span className="absolute right-[3px] bottom-[3px]">
        <svg width="8" height="8" viewBox="0 0 8 8" fill="#b4b4b4" className="block" aria-hidden="true"><path d="M6 0h2v2H6zM3 3h2v2H3zM6 3h2v2H6zM0 6h2v2H0zM3 6h2v2H3zM6 6h2v2H6z" /></svg>
      </span>
    </section>
  );
}

export default function App() {
  return (
    <main className="relative flex h-screen flex-col overflow-hidden bg-white font-['Noto_Sans_CJK_SC',sans-serif]">
      <TabStrip />
      <MenuRow />
      <Ribbon />
      <FormulaBar />
      <Sheet />
      <SaveDialog />
      <p className="absolute right-[15px] bottom-1 z-30 text-[20px] leading-8 font-light text-[#777] [text-shadow:0_0_2px_#fff]">CSDN @你的小啊廖</p>
    </main>
  );
}
